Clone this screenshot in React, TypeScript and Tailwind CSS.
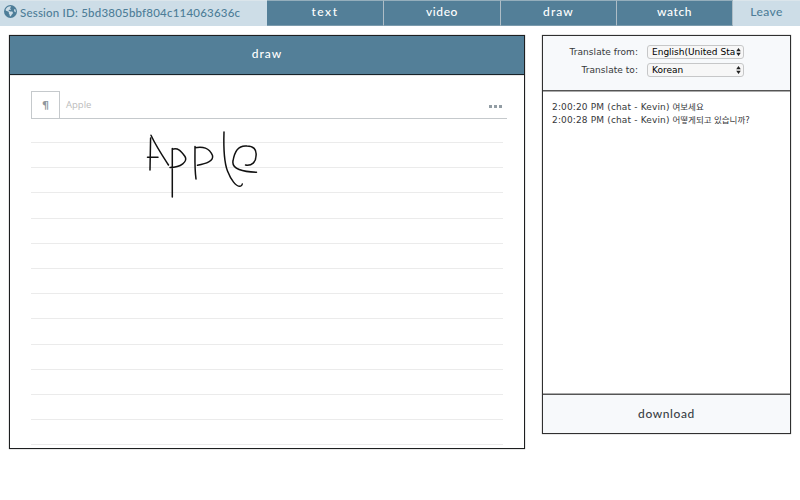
import React from "react";
import { FaEarthAmericas } from "react-icons/fa6";

const hand = "font-['Lato','DejaVu_Sans',sans-serif]";

const tabs = [
  { label: "text", width: "w-[117px]", text: "tracking-[1.5px]" },
  { label: "video", width: "w-[117px]", text: "tracking-[0.6px]" },
  { label: "draw", width: "w-[116px]", text: "tracking-[1.1px]" },
  { label: "watch", width: "w-[116px]", text: "tracking-[0.6px]" },
];

const messages = [
  { meta: "2:00:20 PM (chat - Kevin)", text: "여보세요" },
  { meta: "2:00:28 PM (chat - Kevin)", text: "어떻게되고 있습니까?" },
];

function TopBar() {
  return (
    <header className={`flex h-[26px] w-full border-t border-[#dbe5eb] bg-[#cddde7] text-[12px] font-medium leading-[14px] text-[#4d7d98] ${hand}`}>
      <div className="flex w-[267px] items-start pl-[4px] pt-[4px]">
        <FaEarthAmericas className="size-[13px] shrink-0" />
        <span className="ml-[3px] mt-[1px] whitespace-nowrap text-[11.5px] tracking-[0.2px]">Session ID: 5bd3805bbf804c114063636c</span>
      </div>
      <nav className="-mt-px flex">
        {tabs.map((t) => (
          <div key={t.label} className={`h-[26px] border-r border-t border-b border-b-[#7b9bad] border-r-[#aebdc6] border-t-[#94aebc] bg-[#537f98] pt-[4px] text-center text-white ${t.width} ${t.text}`}>
            {t.label}
          </div>
        ))}
      </nav>
      <div className="flex-1 pt-[4px] text-center tracking-[0.4px]">Leave</div>
    </header>
  );
}

function Select({ value }: { value: string }) {
  return (
    <div className="relative h-[14px] w-[97px] rounded-[3px] border border-[#c6c7c8] bg-[#f7f7f7] pl-[4px] leading-[12px] text-black">
      <span className="block whitespace-nowrap">{value}</span>
      <svg className="absolute right-[2px] top-[2px] h-[8px] w-[5px]" viewBox="0 0 5 8" fill="#222">
        <path d="M2.5 0 4.8 3.2H.2ZM2.5 8 .2 4.8h4.6Z" />
      </svg>
    </div>
  );
}

function DrawPanel() {
  return (
    <section className="h-[414px] w-[516px] overflow-hidden border border-[#1d1f20] bg-white shadow-[0_0_1px_#777]">
      <div className={`h-[39px] border-b border-[#182228] bg-[#537f98] pt-[10px] text-center text-[12px] font-medium leading-[15px] tracking-[1px] text-white shadow-[0_0_1px_#777] ${hand}`}>
        draw
      </div>
      <div className="ml-[21px] mt-[16px] flex h-[28px] w-[476px] items-center border-b border-[#c5c9cc] font-['Open_Sans','Noto_Sans',sans-serif]">
        <div className="flex h-[28px] w-[29px] items-center justify-center border border-[#c5c9cc] pt-[3px] font-['DejaVu_Sans',sans-serif] text-[11px] font-bold text-[#8e979d]">¶</div>
        <span className="ml-[6px] mt-px text-[9.5px] text-[#bcbcbc]">Apple</span>
        <div className="ml-auto mr-[5px] mt-[3px] flex gap-[2px]">
          <i className="size-[3px] bg-[#929da4]" />
          <i className="size-[3px] bg-[#929da4]" />
          <i className="size-[3px] bg-[#929da4]" />
        </div>
      </div>
      <svg className="ml-[21px] block h-[329px] w-[476px]" viewBox="31 119 476 329" fill="none">
        {Array.from({ length: 13 }, (_, i) => (
          <path key={i} d={`M31 ${Math.round(142 + i * 25.2) + 0.5}H503`} stroke="#ebebeb" strokeWidth="1" />
        ))}
        <g stroke="#111" strokeWidth="1.5" strokeLinecap="round" strokeLinejoin="round">
          <path d="M150 170 150.6 138M151 135.2C156 146 162 155 168.5 165M147.5 157.3H158" />
          <path d="M172.3 148.5 172.3 197M172.3 149.3C178 147.5 181 151 185 156.5C188 161.5 181 167.3 170 167.5" />
          <path d="M195 146.5C195 160 194.5 168 196 179M195 147.7C203 146.5 209 147.5 212.5 155.5C214 161 206 163.5 197.5 165.3" />
          <path d="M224 132C223.5 147 224 162 227.5 171C231 180 236 186.5 240 186.3Q242 186 242.3 184" />
          <path d="M245.5 165C252 166 256 162 256 156C257 149 253 146 247 146C239 145 234.5 151 233 161C231.5 169 243 172 256.5 172.2" />
        </g>
      </svg>
    </section>
  );
}

function ChatPanel() {
  return (
    <aside className="ml-[17px] flex h-[399px] w-[249px] flex-col border border-[#303030] bg-white font-['DejaVu_Sans','Noto_Sans_CJK_KR',sans-serif] text-[9px] text-[#36383a] shadow-[0_0_1px_#777]">
      <div className="flex h-[55px] flex-col gap-[4px] border-b border-[#555] bg-[#f7f9fb] pt-[9px] leading-[14px] shadow-[0_1px_0_#aaa]">
        <div className="flex"><span className="mr-[9px] w-[95px] whitespace-nowrap text-right tracking-[0.05px]">Translate from:</span><Select value="English(United Sta" /></div>
        <div className="flex"><span className="mr-[9px] w-[95px] whitespace-nowrap text-right tracking-[0.05px]">Translate to:</span><Select value="Korean" /></div>
      </div>
      <div className="flex-1 pl-[9px] pt-[10px]">
        {messages.map((m) => (
          <p key={m.meta} className="flex h-[13px] gap-[3px] whitespace-nowrap leading-[13px]">
            <span className="tracking-[0.15px]">{m.meta}</span>
            <span className="text-[8.5px] tracking-[-0.05px]">{m.text}</span>
          </p>
        ))}
      </div>
      <div className={`h-[39px] border-t border-[#555] bg-[#f7f9fb] pt-[11px] text-center text-[12px] font-medium leading-[15px] tracking-[0.6px] text-[#3a4146] shadow-[0_-1px_0_#aaa] ${hand}`}>
        download
      </div>
    </aside>
  );
}

export default function App() {
  return (
    <div className="h-[500px] w-[800px] overflow-hidden bg-white">
      <TopBar />
      <main className="flex items-start pl-[9px] pt-[9px]">
        <DrawPanel />
        <ChatPanel />
      </main>
    </div>
  );
}
